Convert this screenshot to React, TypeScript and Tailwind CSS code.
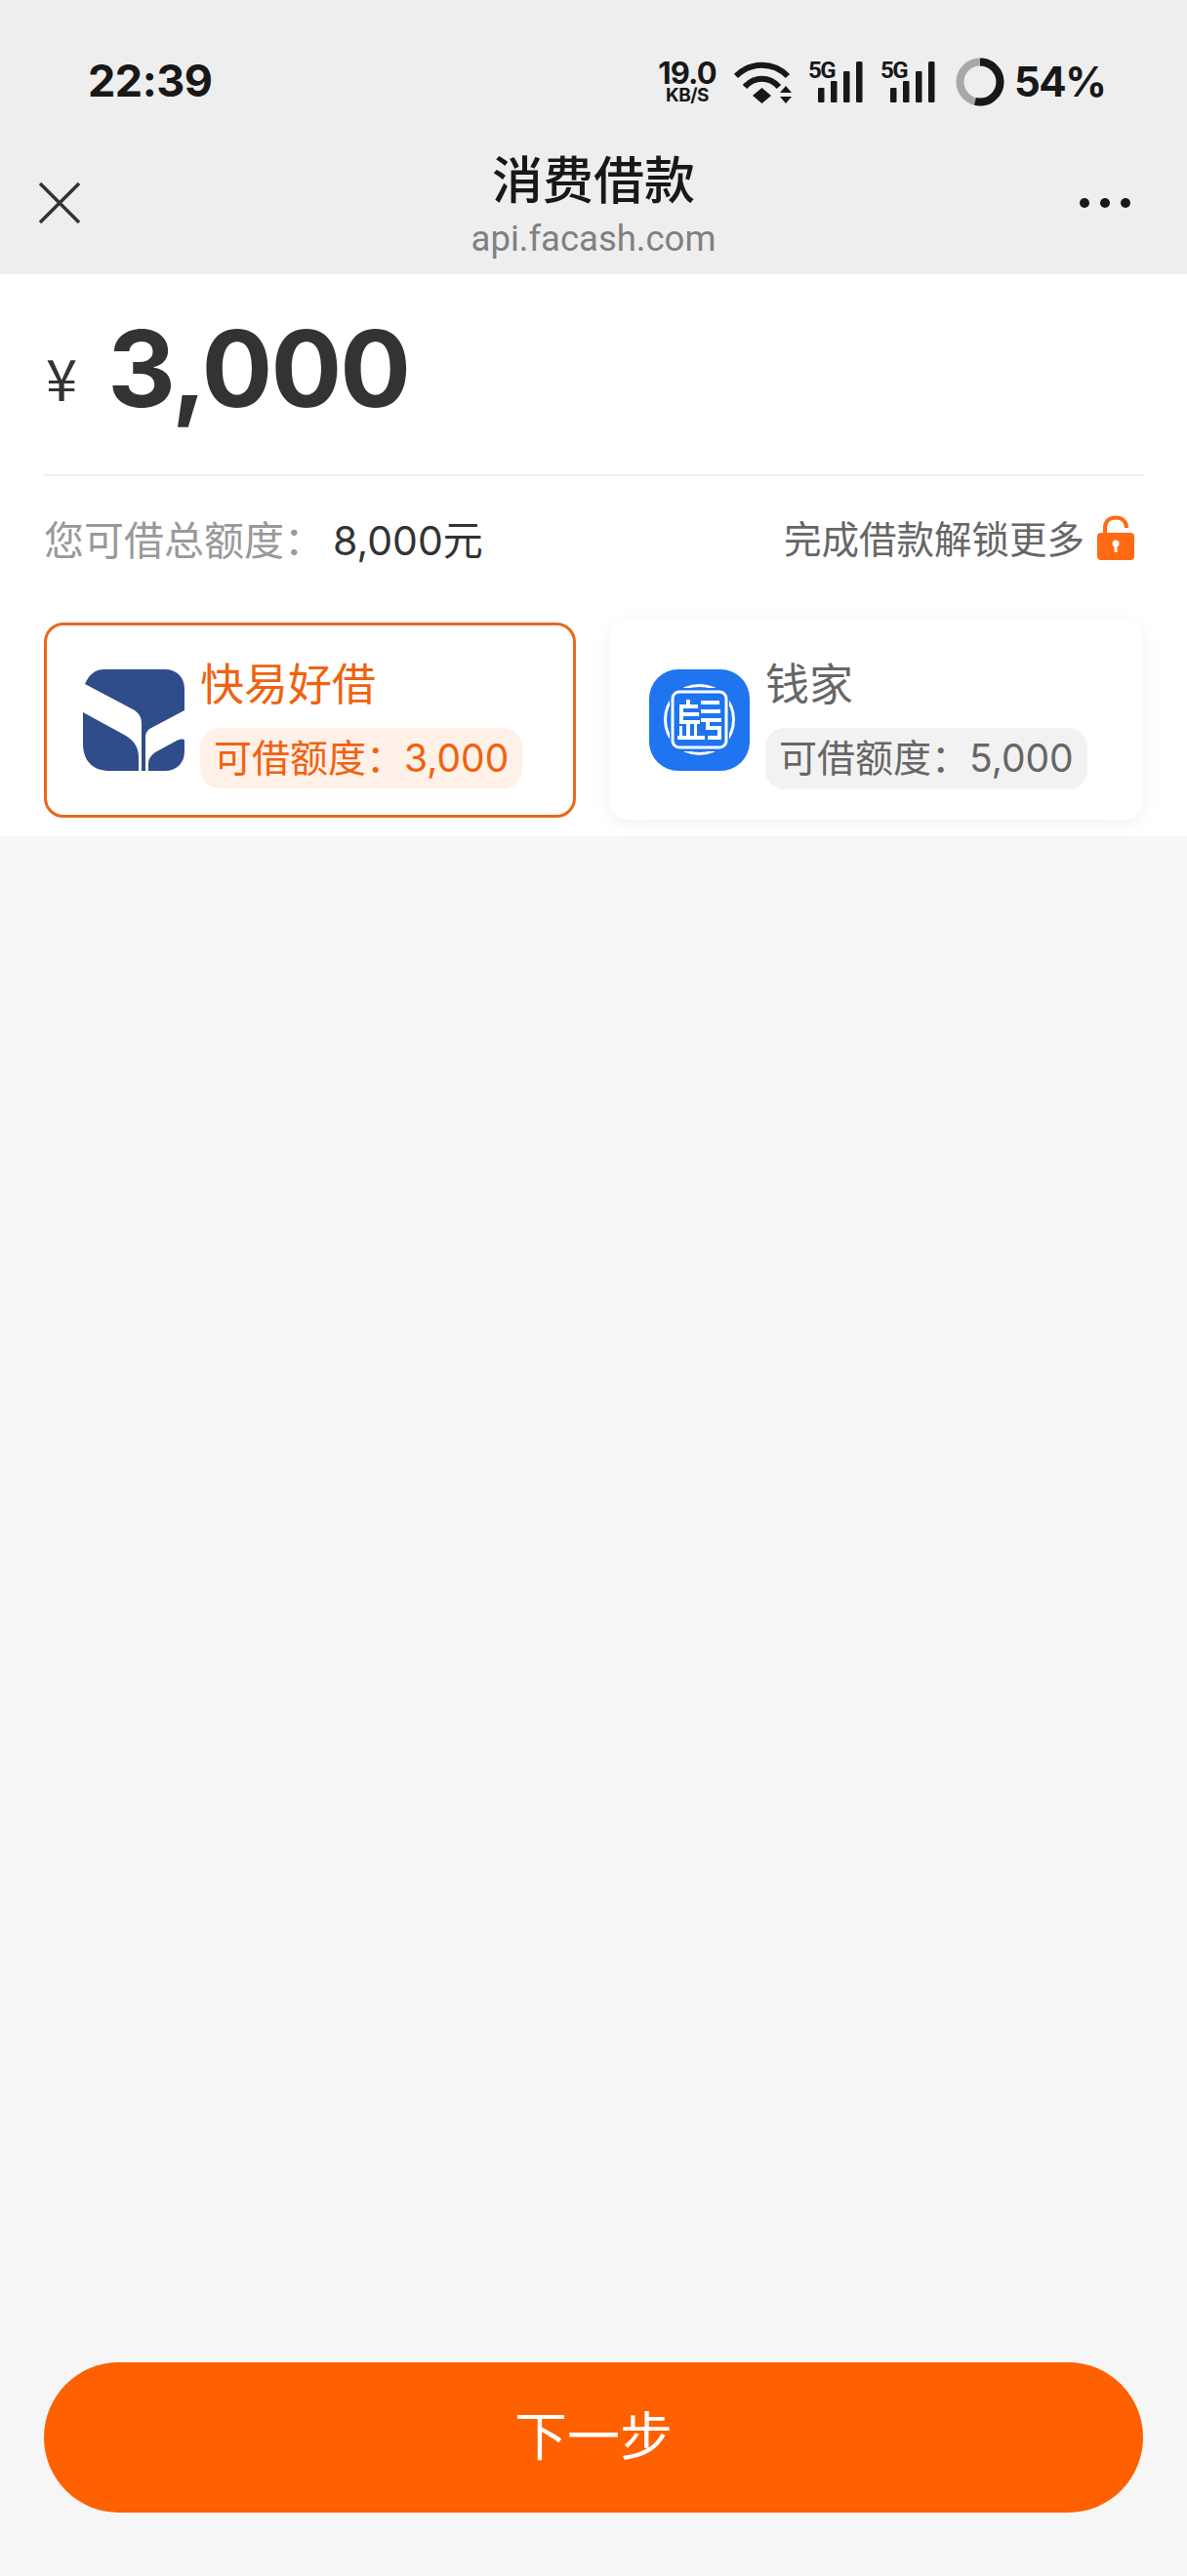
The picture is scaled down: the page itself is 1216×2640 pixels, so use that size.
const latin = "font-['Inter','Noto_Sans_CJK_SC',sans-serif]";

function Signal() {
  return (
    <div className="relative w-[56px] h-[42px]">
      <span className="absolute left-0 top-[-4px] text-[24px] leading-[26px] font-bold tracking-[-1.5px] text-[#181818] font-['Roboto',sans-serif]">5G</span>
      <svg width="56" height="42" viewBox="0 0 56 42" className="block">
        <rect x="10" y="27" width="6.500" height="15" rx="1" fill="#181818" />
        <rect x="23" y="20" width="6.500" height="22" rx="1" fill="#181818" />
        <rect x="36" y="10" width="6.500" height="32" rx="1" fill="#181818" />
        <rect x="49" y="0" width="6.500" height="42" rx="1.500" fill="#181818" />
      </svg>
    </div>
  );
}

function Wifi() {
  return (
    <svg width="59" height="43" viewBox="0 0 59 43" fill="none" className="block">
      <path d="M2 15 C17 0 40 0 55 15" stroke="#181818" strokeWidth="6" />
      <path d="M11 26 C21 15 36 15 46 26" stroke="#181818" strokeWidth="6" />
      <path d="M28.500 27 L38 35 L28.500 43 L19 35 Z" fill="#181818" />
      <path d="M53 25 L59 32 H47 Z M47 36 H59 L53 43 Z" fill="#181818" />
    </svg>
  );
}

function Ring() {
  return (
    <svg width="50" height="50" viewBox="0 0 50 50" fill="none" className="block">
      <circle cx="25" cy="25" r="20.500" stroke="#a8a8a8" strokeWidth="8" />
      <circle cx="25" cy="25" r="20.500" stroke="#181818" strokeWidth="8" pathLength="100" strokeDasharray="54 100" transform="rotate(-90 25 25)" />
    </svg>
  );
}

function Lock() {
  return (
    <svg width="38" height="46" viewBox="0 0 38 46" fill="none" className="block">
      <path d="M8 21 V13 C8 6 13 2.500 19 2.500 C25 2.500 30 6 30 13" stroke="#ff6a13" strokeWidth="4" />
      <rect x="0" y="18" width="38" height="28" rx="4" fill="#ff6a13" />
      <circle cx="19" cy="29" r="3.500" fill="#fff" />
      <rect x="17.500" y="29" width="3" height="9" fill="#fff" />
    </svg>
  );
}

function LeafLogo() {
  return (
    <svg width="104" height="104" viewBox="0 0 104 104" className="block shrink-0">
      <path fill="#2f4d8a" d="M2 15 C6 6 12 0 22 0 H84 C96 0 104 8 104 20 V42 L70 60 C66 62 64 65 64 70 V104 H60 V56 C60 49 58 46 53 42 Z" />
      <path fill="#2f4d8a" d="M0 44 L44 68 C52 73 57 80 57 90 V104 H28 C10 104 0 94 0 76 Z" />
      <path fill="#2f4d8a" d="M67 104 V97 C67 92 69 89 74 85 L96 73 C100 71 104 71 104 73 V84 C104 96 96 104 84 104 Z" />
    </svg>
  );
}

function CoinLogo() {
  return (
    <svg width="103" height="104" viewBox="0 0 103 104" className="block shrink-0">
      <rect width="103" height="104" rx="30" fill="#1f74f0" />
      <circle cx="51.500" cy="51.500" r="35" fill="none" stroke="#fff" strokeWidth="3" />
      <rect x="21" y="19" width="61" height="65" rx="8" fill="#1f74f0" />
      <rect x="24" y="23" width="55" height="57" rx="7" fill="none" stroke="#fff" strokeWidth="3" />
      <g fill="#fff">
        <rect x="38" y="31" width="4" height="7" />
        <rect x="31" y="36" width="19" height="4" />
        <rect x="31" y="36" width="4" height="16" />
        <rect x="31" y="44" width="20" height="4" />
        <rect x="31" y="52" width="21" height="4" />
        <rect x="38" y="52" width="4" height="18" />
        <rect x="46" y="56" width="3" height="14" />
        <rect x="31" y="58" width="3" height="12" />
        <rect x="29" y="68" width="28" height="4" />
        <rect x="53" y="32" width="19" height="4" />
        <rect x="53" y="41" width="20" height="4" />
        <rect x="53" y="50" width="21" height="4" />
        <rect x="58" y="50" width="4" height="10" />
        <rect x="58" y="58" width="16" height="4" />
        <rect x="70" y="58" width="4" height="14" />
        <rect x="60" y="68" width="14" height="4" />
      </g>
    </svg>
  );
}

export default function App() {
  return (
    <div className={`min-h-[2640px] flex flex-col bg-[#f6f6f6] ${latin}`}>
      <header className="bg-[#eeeeee] h-[281px] shrink-0">
        <div className="h-[135px] flex justify-between pl-[90px] pr-[86px]">
          <span className="text-[45px] leading-[50px] mt-[58px] font-bold text-[#181818] tracking-[-0.5px]">22:39</span>
          <div className="flex items-start pt-[59px]">
            <div className="flex flex-col items-center w-[62px] font-bold text-[#181818] mr-[17px] mt-[1px]">
              <span className="text-[31px] leading-[30px] tracking-[-0.8px]">19.0</span>
              <span className="text-[19px] leading-[15px] tracking-[-0.5px]">KB/S</span>
            </div>
            <div className="mt-[4px] mr-[17px]"><Wifi /></div>
            <div className="mt-[4px] mr-[18px]"><Signal /></div>
            <div className="mt-[4px] mr-[21px]"><Signal /></div>
            <Ring />
            <span className="ml-[10px] w-[91px] text-[42px] leading-[50px] font-bold text-[#181818] tracking-[-1.5px] whitespace-nowrap">54%</span>
          </div>
        </div>
        <div className="h-[146px] flex justify-between items-center px-[40px] relative">
          <svg width="42" height="42" viewBox="0 0 42 42" className="block" fill="none">
            <path d="M1 1 L41 41 M41 1 L1 41" stroke="#333" strokeWidth="3.500" />
          </svg>
          <div className="absolute inset-x-0 top-[20px] flex flex-col items-center">
            <span className="text-[52px] leading-[54px] font-medium text-[#181818] font-['Noto_Sans_CJK_SC',sans-serif]">消费借款</span>
            <span className="text-[36.500px] leading-[42px] mt-[15px] text-[#808080] font-['Roboto',sans-serif]">api.facash.com</span>
          </div>
          <div className="flex gap-[11px] ml-auto mr-[18px]">
            <span className="w-[10px] h-[10px] rounded-full bg-[#181818]" />
            <span className="w-[10px] h-[10px] rounded-full bg-[#181818]" />
            <span className="w-[10px] h-[10px] rounded-full bg-[#181818]" />
          </div>
        </div>
      </header>

      <section className="bg-white h-[576px] shrink-0 px-[45px]">
        <div className="h-[207px] border-b-2 border-[#eeeeee] flex items-baseline pt-[47px]">
          <span className="text-[58px] leading-[100px] text-[#333333] ml-[2px] -translate-y-[6px] font-['Noto_Sans_CJK_SC',sans-serif]">¥</span>
          <span className="text-[108px] leading-[100px] font-bold text-[#333333] ml-[31px] tracking-[-2px]">3,000</span>
        </div>
        <div className="flex justify-between items-center mt-[43px] h-[46px]">
          <div className="flex items-center">
            <span className="text-[41px] leading-[46px] text-[#999999]">您可借总额度：</span>
            <span className="text-[41px] leading-[46px] text-[#333333] ml-[9px]">8,000元</span>
          </div>
          <div className="flex items-center -mt-[3px]">
            <span className="text-[38.500px] leading-[46px] text-[#666666]">完成借款解锁更多</span>
            <span className="ml-[13px] mr-[9px] -mt-[3px]"><Lock /></span>
          </div>
        </div>
        <div className="flex justify-between mt-[61px]">
          <div className="w-[545px] h-[200px] border-[3px] border-[#e8681f] rounded-[20px] bg-white flex items-center pl-[37px]">
            <LeafLogo />
            <div className="ml-[16px] pt-[8px] flex flex-col items-start">
              <span className="text-[45px] leading-[52px] text-[#f0620f]">快易好借</span>
              <span className="mt-[18px] h-[62px] flex items-center px-[14px] rounded-[20px] bg-[#fff0e8] text-[39px] text-[#f0620f] whitespace-nowrap">可借额度：3,000</span>
            </div>
          </div>
          <div className="w-[547px] h-[204px] -mt-[2px] rounded-[20px] bg-white shadow-[0_4px_20px_rgba(0,0,0,0.06)] flex items-center pl-[41px]">
            <CoinLogo />
            <div className="ml-[16px] pt-[8px] flex flex-col items-start">
              <span className="text-[45px] leading-[52px] text-[#666666]">钱家</span>
              <span className="mt-[18px] h-[63px] flex items-center px-[14px] rounded-[20px] bg-[#f2f2f2] text-[39px] text-[#666666] whitespace-nowrap">可借额度：5,000</span>
            </div>
          </div>
        </div>
      </section>

      <main className="flex-1 flex flex-col justify-end px-[45px] pb-[65px]">
        <button className="h-[154px] w-full rounded-full bg-[#ff6000] text-white text-[54px] leading-none">下一步</button>
      </main>
    </div>
  );
}
